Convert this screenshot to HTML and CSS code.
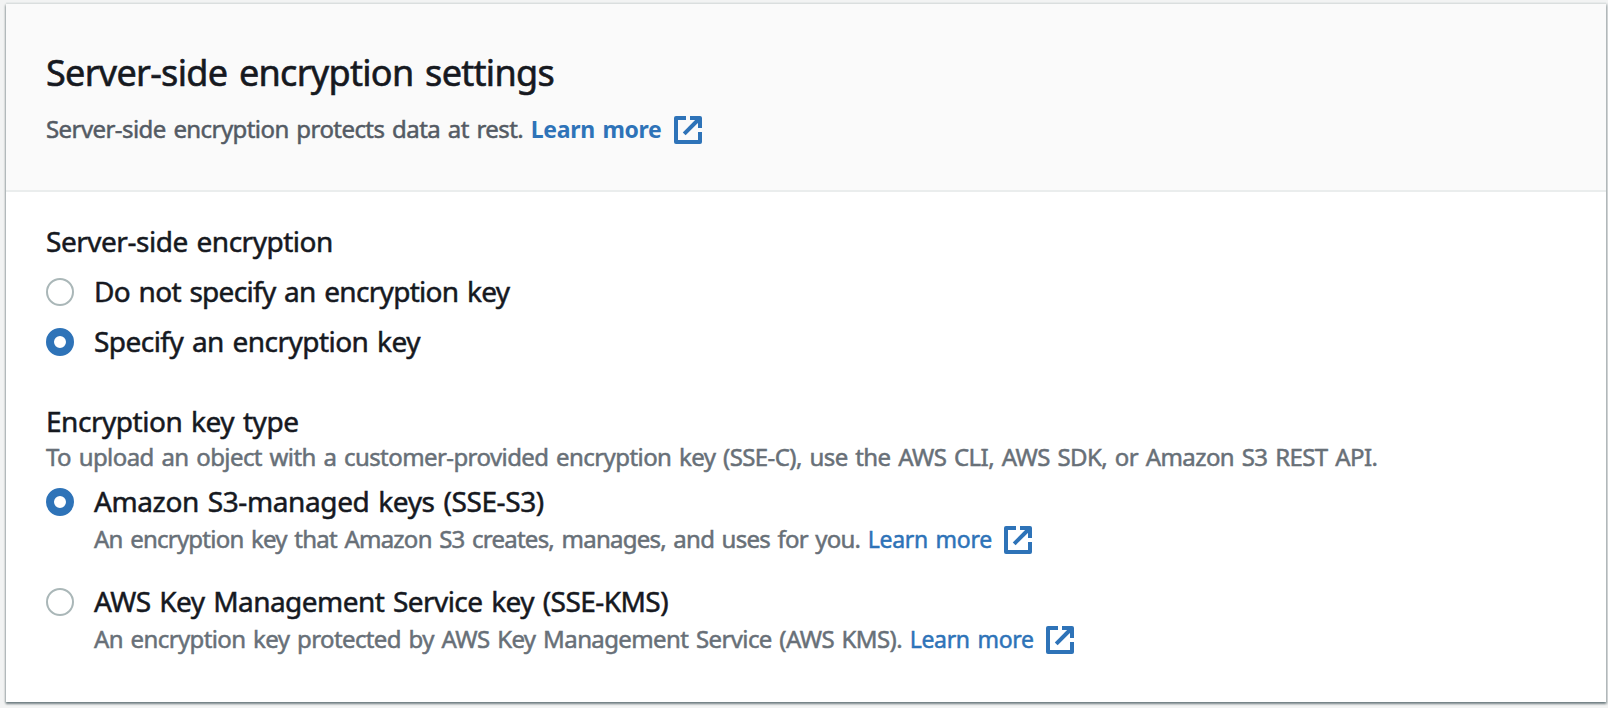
FILE: index.html
```html
<!DOCTYPE html>
<html lang="en">
<head>
<meta charset="utf-8">
<title>Server-side encryption settings</title>
<link rel="stylesheet" href="styles.css">
</head>
<body>
<svg class="sprite" aria-hidden="true">
  <symbol id="external" viewBox="0 0 28 28">
    <path d="M12 2H2V26H26V16M16 2H26V12" fill="none" stroke="currentColor" stroke-width="4"/>
    <path d="M10.2 17.8L24 4" fill="none" stroke="currentColor" stroke-width="4"/>
  </symbol>
</svg>
<main class="card">
  <header class="card-header">
    <h1 class="title">Server-side encryption settings</h1>
    <p class="subtitle"><span class="intro">Server-side encryption protects data at rest. </span><a class="link strong">Learn more<svg class="icon"><use href="#external"/></svg></a></p>
  </header>
  <section class="card-body">
    <fieldset class="group">
      <h2 class="label label-encryption">Server-side encryption</h2>
      <div class="option"><span class="radio"></span><span class="label label-none">Do not specify an encryption key</span></div>
      <div class="option"><span class="radio checked"></span><span class="label label-specify">Specify an encryption key</span></div>
    </fieldset>
    <fieldset class="group">
      <h2 class="label label-type">Encryption key type</h2>
      <p class="hint">To upload an object with a customer-provided encryption key (SSE-C), use the AWS CLI, AWS SDK, or Amazon S3 REST API.</p>
      <div class="choice">
        <div class="option"><span class="radio checked"></span><span class="label label-s3">Amazon S3-managed keys (SSE-S3)</span></div>
        <p class="description"><span class="about-s3">An encryption key that Amazon S3 creates, manages, and uses for you. </span><a class="link">Learn more<svg class="icon"><use href="#external"/></svg></a></p>
      </div>
      <div class="choice">
        <div class="option"><span class="radio"></span><span class="label label-kms">AWS Key Management Service key (SSE-KMS)</span></div>
        <p class="description"><span class="about-kms">An encryption key protected by AWS Key Management Service (AWS KMS). </span><a class="link">Learn more<svg class="icon"><use href="#external"/></svg></a></p>
      </div>
    </fieldset>
  </section>
</main>
</body>
</html>
```
FILE: styles.css
```css
* { box-sizing: border-box; margin: 0; }
body {
  height: 708px;
  padding: 4px 2px 6px 6px;
  overflow: hidden;
  background: #f2f3f3;
  color: #16191f;
  font-family: "Noto Sans", "Open Sans", sans-serif;
  font-kerning: normal;
  white-space: nowrap;
  word-spacing: 2px;
}
.sprite { position: absolute; width: 0; height: 0; }
.card {
  height: 698px;
  background: #fff;
  box-shadow: 0 2px 2px rgba(0, 28, 36, .35), 1px 1px 2px 1px rgba(0, 28, 36, .18), -1px 1px 2px 0 rgba(0, 28, 36, .18), 0 -2px 0 #eaeded;
}
.card-header {
  height: 188px;
  padding: 47px 40px 0;
  background: #fafafa;
  border-bottom: 2px solid #eaeded;
}
.title {
  font-size: 36px;
  line-height: 44px;
  font-weight: 400;
  letter-spacing: -.7px;
  word-spacing: 3px;
  -webkit-text-stroke: .6px;
}
.subtitle, .hint, .description {
  display: flex;
  height: 36px;
  font-size: 24px;
  line-height: 36px;
  color: #687078;
  white-space: pre;
  -webkit-text-stroke: .5px;
}
.subtitle { margin-top: 16px; color: #545b64; }
.card-body { padding: 31px 40px 0; }
.group { border: 0; padding: 0; min-width: 0; }
.group + .group { margin-top: 44px; }
.label {
  font-size: 28px;
  line-height: 36px;
  font-weight: 400;
  -webkit-text-stroke: .5px;
}
.option { display: flex; gap: 20px; height: 36px; }
.group > .option { margin-top: 14px; }
.radio {
  flex: none;
  width: 28px;
  height: 28px;
  margin-top: 5px;
  border: 2px solid #aab7b8;
  border-radius: 50%;
  background: #fff;
}
.radio.checked { border: 8px solid #2e73b8; }
.choice { margin-top: 8px; }
.choice + .choice { margin-top: 26px; }
.description { margin-top: 2px; padding-left: 48px; }
.link { display: flex; color: #2e73b8; font-size: 23px; letter-spacing: -.3px; }
.strong { font-weight: 700; letter-spacing: -.34px; -webkit-text-stroke: 0; }
.icon { width: 28px; height: 28px; margin: 5px 0 0 12px; border-radius: 2px; }
.strong .icon { margin-left: 13px; }
.intro { letter-spacing: -.57px; }
.label-encryption { letter-spacing: -.48px; }
.label-none { letter-spacing: -.7px; }
.label-specify { letter-spacing: -.54px; }
.label-type { letter-spacing: -.47px; }
.hint { letter-spacing: -.58px; }
.label-s3 { letter-spacing: -.39px; }
.about-s3 { letter-spacing: -.76px; }
.label-kms { letter-spacing: -.55px; }
.about-kms { letter-spacing: -.61px; }
```
